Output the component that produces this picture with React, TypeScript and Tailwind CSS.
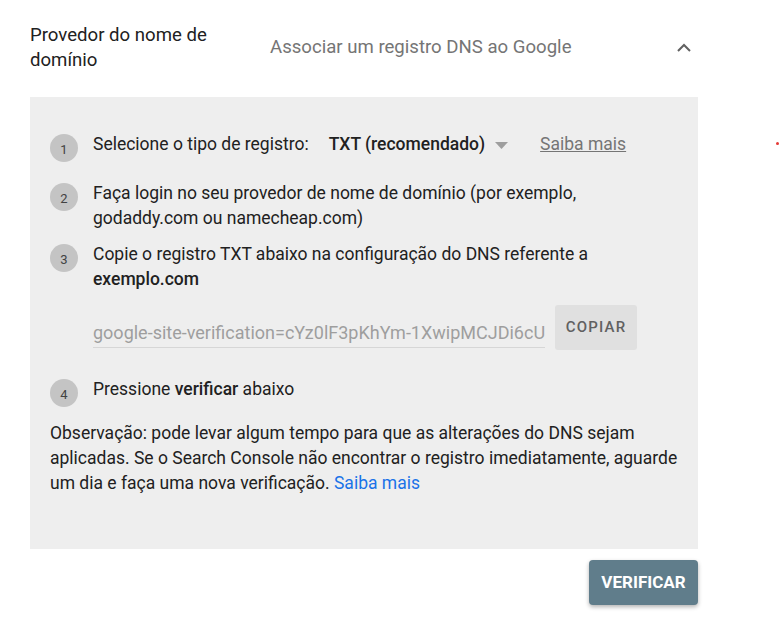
type StepProps = {
  n: number;
  className?: string;
  children: React.ReactNode;
};

function Step({ n, className = "", children }: StepProps) {
  return (
    <div className={`flex items-start ${className}`}>
      <div className="mt-[2px] flex h-[28px] w-[28px] shrink-0 items-center justify-center rounded-full bg-[#c4c4c4] pt-[4px] text-[13px] text-[#424242]">
        {n}
      </div>
      <div className="ml-[15px] text-[17.5px] leading-[25px] text-[#212121]">
        {children}
      </div>
    </div>
  );
}

export default function App() {
  return (
    <main
      className="relative h-[630px] w-[782px] bg-white"
      style={{ fontFamily: "Roboto, 'Liberation Sans', sans-serif" }}
    >
      <div className="absolute left-[776px] top-[142px] h-[3px] w-[3px] rounded-full bg-[#e53935]" />

      <div className="ml-[30px] w-[668px]">
        <div className="flex h-[72px] items-start pt-[23px]">
          <div className="w-[240px] text-[18.6px] leading-[25px] text-[#212121]">
            Provedor do nome de
            <br />
            domínio
          </div>
          <div className="mt-[12px] flex-1 text-[18.6px] leading-[25px] text-[#757575]">
            Associar um registro DNS ao Google
          </div>
          <svg width="16" height="10" viewBox="0 0 16 10" className="mr-[6px] mt-[20px]">
            <path d="M2 8 L8 2 L14 8" fill="none" stroke="#616161" strokeWidth="2" />
          </svg>
        </div>

        <div className="mt-[25px] bg-[#eeeeee] px-[20px] pb-[53px] pt-[35px]">
          <Step n={1}>
            <span>Selecione o tipo de registro:</span>
            <span className="ml-[20px] font-medium">TXT (recomendado)</span>
            <svg width="13" height="7" viewBox="0 0 13 7" className="ml-[10px] inline-block align-middle">
              <path d="M0 0 L13 0 L6.5 7 Z" fill="#9e9e9e" />
            </svg>
            <span className="ml-[32px] text-[#757575] underline">Saiba mais</span>
          </Step>

          <Step n={2} className="mt-[19px]">
            Faça login no seu provedor de nome de domínio (por exemplo,
            <br />
            godaddy.com ou namecheap.com)
          </Step>

          <Step n={3} className="mt-[11px]">
            Copie o registro TXT abaixo na configuração do DNS referente a
            <br />
            <span className="font-medium">exemplo.com</span>
          </Step>

          <div className="ml-[43px] mt-[13px] flex items-start">
            <input
              readOnly
              value="google-site-verification=cYz0lF3pKhYm-1XwipMCJDi6cU7tQfHs2mPbVx"
              className="mt-[16px] w-[452px] border-b border-[#d6d6d6] bg-transparent pb-[2px] text-[18px] leading-[24px] text-[#9e9e9e] outline-none"
            />
            <div className="ml-[10px] flex h-[45px] w-[82px] items-center justify-center rounded-[3px] bg-[#e0e0e0] text-[15px] font-medium tracking-[1.2px] text-[#616161]">
              COPIAR
            </div>
          </div>

          <Step n={4} className="mt-[27px]">
            Pressione <span className="font-medium">verificar</span> abaixo
          </Step>

          <p className="mt-[14px] text-[17.5px] leading-[25px] text-[#212121]">
            Observação: pode levar algum tempo para que as alterações do DNS sejam
            aplicadas. Se o Search Console não encontrar o registro imediatamente,
            aguarde um dia e faça uma nova verificação.{" "}
            <span className="text-[#1a73e8]">Saiba mais</span>
          </p>
        </div>

        <div className="mt-[11px] flex justify-end">
          <div className="flex h-[45px] w-[109px] items-center justify-center rounded-[4px] bg-[#607d8b] text-[17px] font-bold text-white shadow-[0_2px_4px_rgba(0,0,0,0.3)]">
            VERIFICAR
          </div>
        </div>
      </div>
    </main>
  );
}
